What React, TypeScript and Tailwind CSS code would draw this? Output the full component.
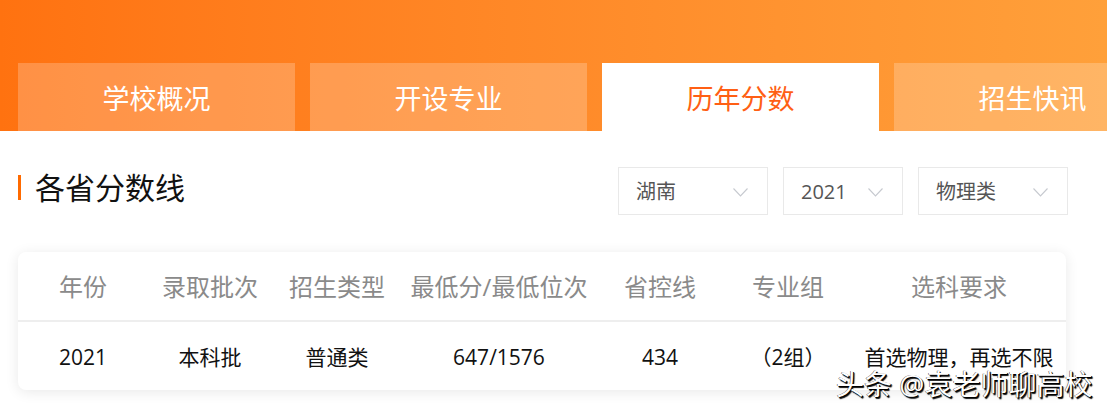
const tabs = ["学校概况", "开设专业", "历年分数", "招生快讯"]

const filters = [
  { label: "湖南", w: "w-[150px]" },
  { label: "2021", w: "w-[120px]" },
  { label: "物理类", w: "w-[150px]" },
]

const cols = ["年份", "录取批次", "招生类型", "最低分/最低位次", "省控线", "专业组", "选科要求"]
const row = ["2021", "本科批", "普通类", "647/1576", "434", "（2组）", "首选物理，再选不限"]

function Chevron() {
  return (
    <svg width="15" height="9" viewBox="0 0 15 9" fill="none">
      <polyline points="0.5,0.5 7.5,8 14.5,0.5" stroke="#c6c9cf" strokeWidth="1.1" />
    </svg>
  )
}

export default function App() {
  return (
    <div className="relative w-[1107px] h-[409px] overflow-hidden bg-white font-['Open_Sans','Noto_Sans_CJK_SC',sans-serif]">
      {/* header tabs */}
      <div className="h-[131px] bg-linear-to-r from-[#ff7210] to-[#ffa03a] pt-[63px] pl-[18px] flex gap-[15px]">
        {tabs.map((t, i) => (
          <div
            key={t}
            className={
              i === 2
                ? "w-[277px] h-[68px] shrink-0 bg-white text-[#ff5f14] flex items-center justify-center pt-[3px] text-[27px] leading-none"
                : "w-[277px] h-[68px] shrink-0 bg-white/[0.22] text-white flex items-center justify-center pt-[3px] text-[27px] leading-none"
            }
          >
            {t}
          </div>
        ))}
      </div>

      {/* title + filters */}
      <div className="mt-[36px] pl-[18px] pr-[39px] flex items-center justify-between h-[48px]">
        <div className="flex items-center mb-[7px]">
          <div className="w-[3px] h-[25px] bg-[#ff6a00]" />
          <div className="ml-[14px] text-[30px] leading-none text-[#111]">各省分数线</div>
        </div>
        <div className="flex gap-[15px]">
          {filters.map((f) => (
            <div
              key={f.label}
              className={`${f.w} h-[48px] border border-[#e9e9e9] flex items-center justify-between pl-[17px] pr-[19px] pt-[2px] text-[20px] text-[#555]`}
            >
              <span>{f.label}</span>
              <Chevron />
            </div>
          ))}
        </div>
      </div>

      {/* table card */}
      <div className="ml-[18px] mt-[37px] w-[1048px] rounded-[8px] bg-white shadow-[0_2px_14px_rgba(0,0,0,0.09)]">
        <div className="grid grid-cols-[130px_124px_130px_194px_128px_128px_214px] h-[70px] items-center pt-[1px] border-b-2 border-[#eeeeee]">
          {cols.map((c) => (
            <div key={c} className="text-center text-[24px] text-[#8a8a8a] whitespace-nowrap">
              {c}
            </div>
          ))}
        </div>
        <div className="grid grid-cols-[130px_124px_130px_194px_128px_128px_214px] h-[68px] items-center pt-[3px]">
          {row.map((c, i) => (
            <div key={i} className="text-center text-[21px] text-[#111] whitespace-nowrap">
              {c}
            </div>
          ))}
        </div>
      </div>

      {/* watermark */}
      <div className="absolute left-[836px] top-[370px] text-[28px] leading-none text-white [text-shadow:1px_1px_0_#000,1.5px_1.5px_1px_#111,-0.5px_-0.5px_0_#444]">
        头条 @袁老师聊高校
      </div>
    </div>
  )
}
